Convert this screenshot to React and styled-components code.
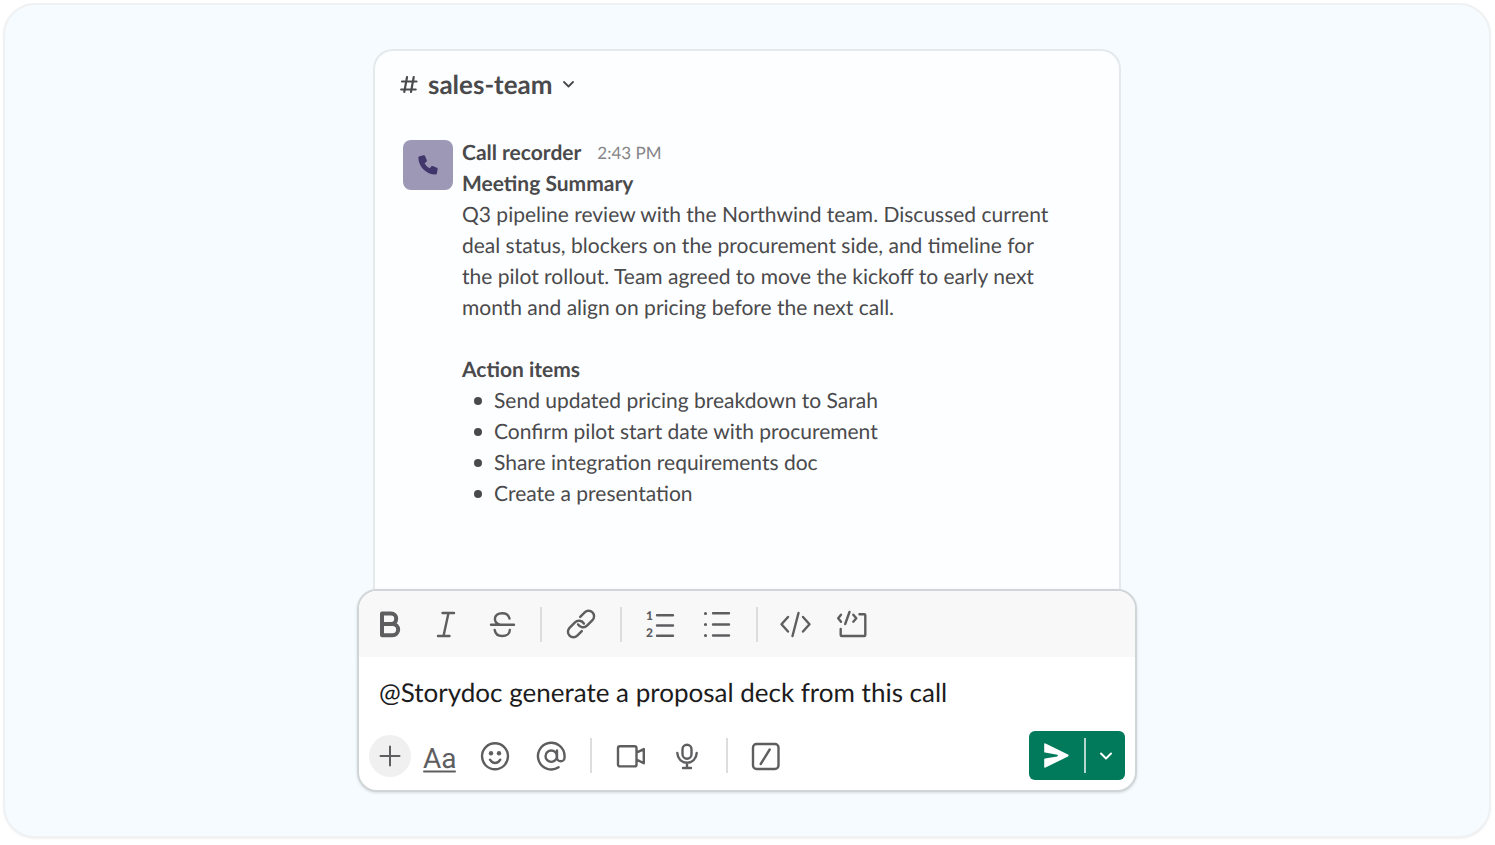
import { useState } from "react";
import styled, { createGlobalStyle } from "styled-components";

const colors = {
    page: "#ffffff",
    stage: "#f5fbff",
    text: "#4a4a4c",
    muted: "#858587",
    icon: "#5e5e60",
    line: "#dddddd",
    green: "#007a5a",
};

const GlobalStyle = createGlobalStyle`
    * {
        box-sizing: border-box;
    }

    body {
        margin: 0;
        background-color: ${colors.page};
        color: ${colors.text};
        font-family: Lato, "Liberation Sans", sans-serif;
        text-rendering: geometricPrecision;
    }

    button,
    input {
        font-family: inherit;
        text-rendering: inherit;
    }
`;

const PageWrapper = styled.div`
    display: flex;
    min-height: 100vh;
    padding: 3px 4px 7px 3px;
`;

const Stage = styled.main`
    flex: 1;
    display: flex;
    justify-content: center;
    align-items: flex-start;
    padding: 44px 24px 42px;
    border: 2px solid #eff1f3;
    border-radius: 32px;
    background-color: ${colors.stage};
    box-shadow: 0 1px 2px rgba(0, 0, 0, 0.06);
`;

const Column = styled.div`
    flex: 1;
    max-width: 780px;
`;

const ChannelCard = styled.section`
    margin: 0 16px;
    padding: 17px 25px 80px;
    border: 2px solid #e4e9ec;
    border-bottom: none;
    border-radius: 20px 20px 0 0;
    background-color: #fdfeff;
`;

const ChannelButton = styled.button`
    display: flex;
    align-items: center;
    gap: 10px;
    padding: 0;
    border: none;
    background: none;
    color: ${colors.text};
    font-size: 26px;
    font-weight: 700;
    line-height: 32px;
`;

const ChannelName = styled.h1`
    margin: 0;
    font-size: inherit;
    line-height: inherit;
`;

const Message = styled.article`
    display: flex;
    align-items: flex-start;
    gap: 9px;
    margin-top: 37px;
    padding: 0 40px 0 3px;
`;

const Avatar = styled.div`
    flex: none;
    display: flex;
    align-items: center;
    justify-content: center;
    width: 50px;
    height: 50px;
    margin-top: 3px;
    border-radius: 8px;
    background-color: #9d98b5;
`;

const MessageBody = styled.div`
    flex: 1;
    font-size: 21px;
    line-height: 31px;
`;

const MessageHeader = styled.header`
    display: flex;
    align-items: center;
    gap: 16px;
`;

const Author = styled.strong`
    font-weight: 700;
`;

const Time = styled.time`
    color: ${colors.muted};
    font-size: 17px;
`;

const Heading = styled.h2`
    margin: 0;
    font-size: inherit;
    font-weight: 700;
`;

const Paragraph = styled.p`
    margin: 0 0 31px;
`;

const ActionList = styled.ul`
    margin: 0;
    padding: 0 0 0 12px;
    list-style: none;
`;

const ActionItem = styled.li`
    display: flex;
    align-items: center;
    gap: 12px;

    &::before {
        content: "";
        width: 8px;
        height: 8px;
        border-radius: 50%;
        background-color: ${colors.text};
    }
`;

const Composer = styled.form`
    border: 2px solid #d0d5d7;
    border-radius: 20px;
    background-color: #ffffff;
    box-shadow: 0 1px 3px rgba(0, 0, 0, 0.12);
    overflow: hidden;
`;

const Toolbar = styled.div`
    display: flex;
    align-items: center;
    gap: 20px;
    height: 66px;
    padding: 0 12px;
    background-color: #f8f8f8;
`;

const Footer = styled.div`
    display: flex;
    align-items: center;
    gap: 10px;
    padding: 0 10px 10px;
`;

const FooterTools = styled.div`
    flex: 1;
    display: flex;
    align-items: center;
    gap: 20px;
`;

const IconButton = styled.button`
    flex: none;
    display: flex;
    align-items: center;
    justify-content: center;
    width: ${(props) => (props.$round ? "42px" : "36px")};
    height: ${(props) => (props.$round ? "42px" : "36px")};
    padding: 0;
    border: none;
    border-radius: ${(props) => (props.$round ? "50%" : "4px")};
    background-color: ${(props) => (props.$round ? "#f0f0f0" : "transparent")};
    color: ${colors.icon};
`;

const Separator = styled.span`
    width: 2px;
    height: 35px;
    margin: 0 1px;
    background-color: ${colors.line};
`;

const MessageInput = styled.input`
    display: block;
    width: 100%;
    height: 36px;
    margin: 17px 0 21px;
    padding: 0 20px;
    border: none;
    outline: none;
    background: none;
    color: #1d1c1d;
    font-size: 26px;
`;

const SendGroup = styled.div`
    display: flex;
    align-items: center;
    height: 49px;
    border-radius: 6px;
    background-color: ${colors.green};
`;

const SendButton = styled.button`
    display: flex;
    align-items: center;
    justify-content: center;
    width: ${(props) => (props.$narrow ? "39px" : "55px")};
    height: 100%;
    padding: 0;
    border: none;
    background: none;
    color: #ffffff;
`;

const SendDivider = styled.span`
    width: 2px;
    height: 35px;
    background-color: #b3d7ce;
`;

const StrokeIcon = styled.svg`
    display: block;
    fill: none;
    stroke: currentColor;
    stroke-width: 2.4;
    stroke-linecap: round;
    stroke-linejoin: round;

    text {
        fill: currentColor;
        stroke: none;
    }
`;

function Icon({ children, size = 36 }) {
    return (
        <StrokeIcon
            width={size}
            height={size}
            viewBox={`0 0 ${size} ${size}`}
            aria-hidden="true"
        >
            {children}
        </StrokeIcon>
    );
}

const formatTools = [
    {
        label: "Bold",
        icon: (
            <path
                strokeWidth="4"
                d="M11 7.500h9a5.200 5.200 0 0 1 0 10.400h-9m0 0h10.500a5.700 5.700 0 0 1 0 11.400H11zM11 7.500v21.500"
            />
        ),
    },
    {
        label: "Italic",
        icon: <path d="M15.500 7H27M11 30h11.500M21.500 7l-5 23" />,
    },
    {
        label: "Strikethrough",
        icon: (
            <path d="M8 18.700h23M26.500 12.500C25.700 9 22.800 7.200 19.200 7.200c-4.400 0-7.300 2.300-7.300 5.700 0 2.900 1.900 4.700 5 5.800M11.700 24c.6 3.700 3.500 6 7.500 6 4.500 0 7.600-2.500 7.600-6.100" />
        ),
    },
    null,
    {
        label: "Link",
        icon: (
            <g transform="translate(2 2) scale(1.333)" strokeWidth="1.800">
                <path d="M9.800 12.300a4.200 4.200 0 0 0 6.700.9l4.100-4.100a4.100 4.100 0 0 0-5.800-5.800l-3.400 3.400" />
                <path d="M14.200 11.700a4.200 4.200 0 0 0-6.700-.9l-4.100 4.100a4.100 4.100 0 0 0 5.800 5.800l3.400-3.400" />
            </g>
        ),
    },
    null,
    {
        label: "Ordered list",
        icon: (
            <>
                <path d="M14 9.200h16M14 19.500h16M14 29.700h16" />
                <text x="3" y="14" fontSize="12" fontWeight="900">
                    1
                </text>
                <text x="3" y="31" fontSize="12" fontWeight="900">
                    2
                </text>
            </>
        ),
    },
    {
        label: "Bulleted list",
        icon: (
            <>
                <path d="M14 7.300h16M14 18.500h16M14 29.500h16" />
                <path strokeWidth="3.200" d="M6.500 7.500h.01M6.500 18.500h.01M6.500 29.500h.01" />
            </>
        ),
    },
    null,
    {
        label: "Code",
        icon: <path d="m9 11-6.500 7.200L9 25.500M19.500 7l-6 23M24 11l6.500 7.200-6.500 7.300" />,
    },
    {
        label: "Code block",
        icon: (
            <path d="M6 8.700 3.200 12.300 6 15.700M14.500 6l-4.300 12M18.300 8.700l3 3.600-3 3.400M24.500 8.300h4.800a1 1 0 0 1 1 1V29a1 1 0 0 1-1 1H6.700a1 1 0 0 1-1-1v-6" />
        ),
    },
];

const insertTools = [
    {
        label: "Formatting",
        icon: (
            <>
                <text
                    x="2"
                    y="30"
                    fontSize="28"
                    fontFamily="Roboto, sans-serif"
                >
                    Aa
                </text>
                <path strokeWidth="2" d="M3 33.500h31" />
            </>
        ),
    },
    {
        label: "Emoji",
        icon: (
            <>
                <circle cx="18" cy="18.300" r="13" />
                <circle cx="14" cy="15.200" r="2.200" fill="currentColor" stroke="none" />
                <circle cx="22" cy="15.200" r="2.200" fill="currentColor" stroke="none" />
                <path d="M13 21.700c2.500 4.400 7.800 4.400 10.300 0" />
            </>
        ),
    },
    {
        label: "Mention",
        icon: (
            <g transform="translate(2.300 2.200) scale(1.330)" strokeWidth="1.800">
                <circle cx="12" cy="12" r="4.300" />
                <path d="M16.300 7.700V13a2.850 2.850 0 0 0 5.700 0v-1a10 10 0 1 0-4.500 8.300" />
            </g>
        ),
    },
    null,
    {
        label: "Record video",
        icon: (
            <path d="M7 8.200h14.500a2 2 0 0 1 2 2v16.200a2 2 0 0 1-2 2H7a2 2 0 0 1-2-2V10.200a2 2 0 0 1 2-2zM23.500 14.700l7.300-3.600v14.200l-7.300-3.800" />
        ),
    },
    {
        label: "Record audio",
        icon: (
            <>
                <rect x="13.500" y="6.700" width="9" height="14" rx="4.500" />
                <path d="M8.300 15c.3 5.700 4.200 9.700 9.700 9.700s9.400-4 9.700-9.700M18 24.700V30M14 30h8" />
            </>
        ),
    },
    null,
    {
        label: "Shortcuts",
        icon: (
            <>
                <rect x="4" y="6" width="25.500" height="25" rx="3.500" />
                <path d="m20.700 11.500-9 14.500" />
            </>
        ),
    },
];

function Tools({ items }) {
    return items.map((item, index) =>
        item ? (
            <IconButton key={item.label} type="button" aria-label={item.label}>
                <Icon>{item.icon}</Icon>
            </IconButton>
        ) : (
            <Separator key={index} />
        )
    );
}

const actionItems = [
    "Send updated pricing breakdown to Sarah",
    "Confirm pilot start date with procurement",
    "Share integration requirements doc",
    "Create a presentation",
];

function Channel() {
    return (
        <ChannelCard>
            <ChannelButton type="button">
                <Icon size={18}>
                    <path
                        strokeWidth="2.200"
                        d="M2 6.500h14.500M1.200 14.500h14.500M7 2.200 4.300 16.900M13.700 2.200 11 16.900"
                    />
                </Icon>
                <ChannelName>sales-team</ChannelName>
                <Icon size={14}>
                    <path strokeWidth="1.800" d="m1 5 4.500 4.500L10 5" />
                </Icon>
            </ChannelButton>
            <Message>
                <Avatar>
                    <svg width="20" height="20" viewBox="0 0 20 20" aria-hidden="true">
                        <path
                            fill="#41366b"
                            d="M1.500 1.200 5.700.3c.6-.1 1.200.2 1.400.8l1.700 4.200c.2.500.1 1.100-.4 1.500L6.600 8.300c1.100 2.200 2.900 3.900 5.100 5l1.500-1.900c.4-.5 1-.6 1.500-.4l4.200 1.700c.6.2.9.8.8 1.400l-.9 4.300c-.1.600-.6 1-1.200 1C8.300 19.400.4 11.700.4 2.400c0-.6.500-1.100 1.100-1.200z"
                        />
                    </svg>
                </Avatar>
                <MessageBody>
                    <MessageHeader>
                        <Author>Call recorder</Author>
                        <Time>2:43 PM</Time>
                    </MessageHeader>
                    <Heading>Meeting Summary</Heading>
                    <Paragraph>
                        Q3 pipeline review with the Northwind team. Discussed
                        current deal status, blockers on the procurement side,
                        and timeline for the pilot rollout. Team agreed to move
                        the kickoff to early next month and align on pricing
                        before the next call.
                    </Paragraph>
                    <Heading>Action items</Heading>
                    <ActionList>
                        {actionItems.map((item) => (
                            <ActionItem key={item}>{item}</ActionItem>
                        ))}
                    </ActionList>
                </MessageBody>
            </Message>
        </ChannelCard>
    );
}

function MessageComposer() {
    const [draft, setDraft] = useState(
        "@Storydoc generate a proposal deck from this call"
    );

    return (
        <Composer onSubmit={(event) => event.preventDefault()}>
            <Toolbar>
                <Tools items={formatTools} />
            </Toolbar>
            <MessageInput
                type="text"
                aria-label="Message sales-team"
                value={draft}
                onChange={(event) => setDraft(event.target.value)}
            />
            <Footer>
                <IconButton type="button" aria-label="Attach" $round>
                    <Icon>
                        <path strokeWidth="2" d="M18 8.500v19M8.500 18h19" />
                    </Icon>
                </IconButton>
                <FooterTools>
                    <Tools items={insertTools} />
                </FooterTools>
                <SendGroup>
                    <SendButton type="submit" aria-label="Send">
                        <svg width="25" height="25" viewBox="0 0 25 25" aria-hidden="true">
                            <path
                                fill="currentColor"
                                d="M1.500.400 24 11.600a1 1 0 0 1 0 1.800L1.500 24.600A.9.9 0 0 1 .2 23.800V16.600a1 1 0 0 1 .8-1l12.200-2.200c.9-.2.9-1.500 0-1.700L1 9.600a1 1 0 0 1-.8-1V1.200A.9.9 0 0 1 1.500.400z"
                            />
                        </svg>
                    </SendButton>
                    <SendDivider />
                    <SendButton type="button" aria-label="Send options" $narrow>
                        <Icon size={18}>
                            <path strokeWidth="2" d="m4 6.500 5 5 5-5" />
                        </Icon>
                    </SendButton>
                </SendGroup>
            </Footer>
        </Composer>
    );
}

function App() {
    return (
        <PageWrapper>
            <GlobalStyle />
            <Stage>
                <Column>
                    <Channel />
                    <MessageComposer />
                </Column>
            </Stage>
        </PageWrapper>
    );
}

export default App;
